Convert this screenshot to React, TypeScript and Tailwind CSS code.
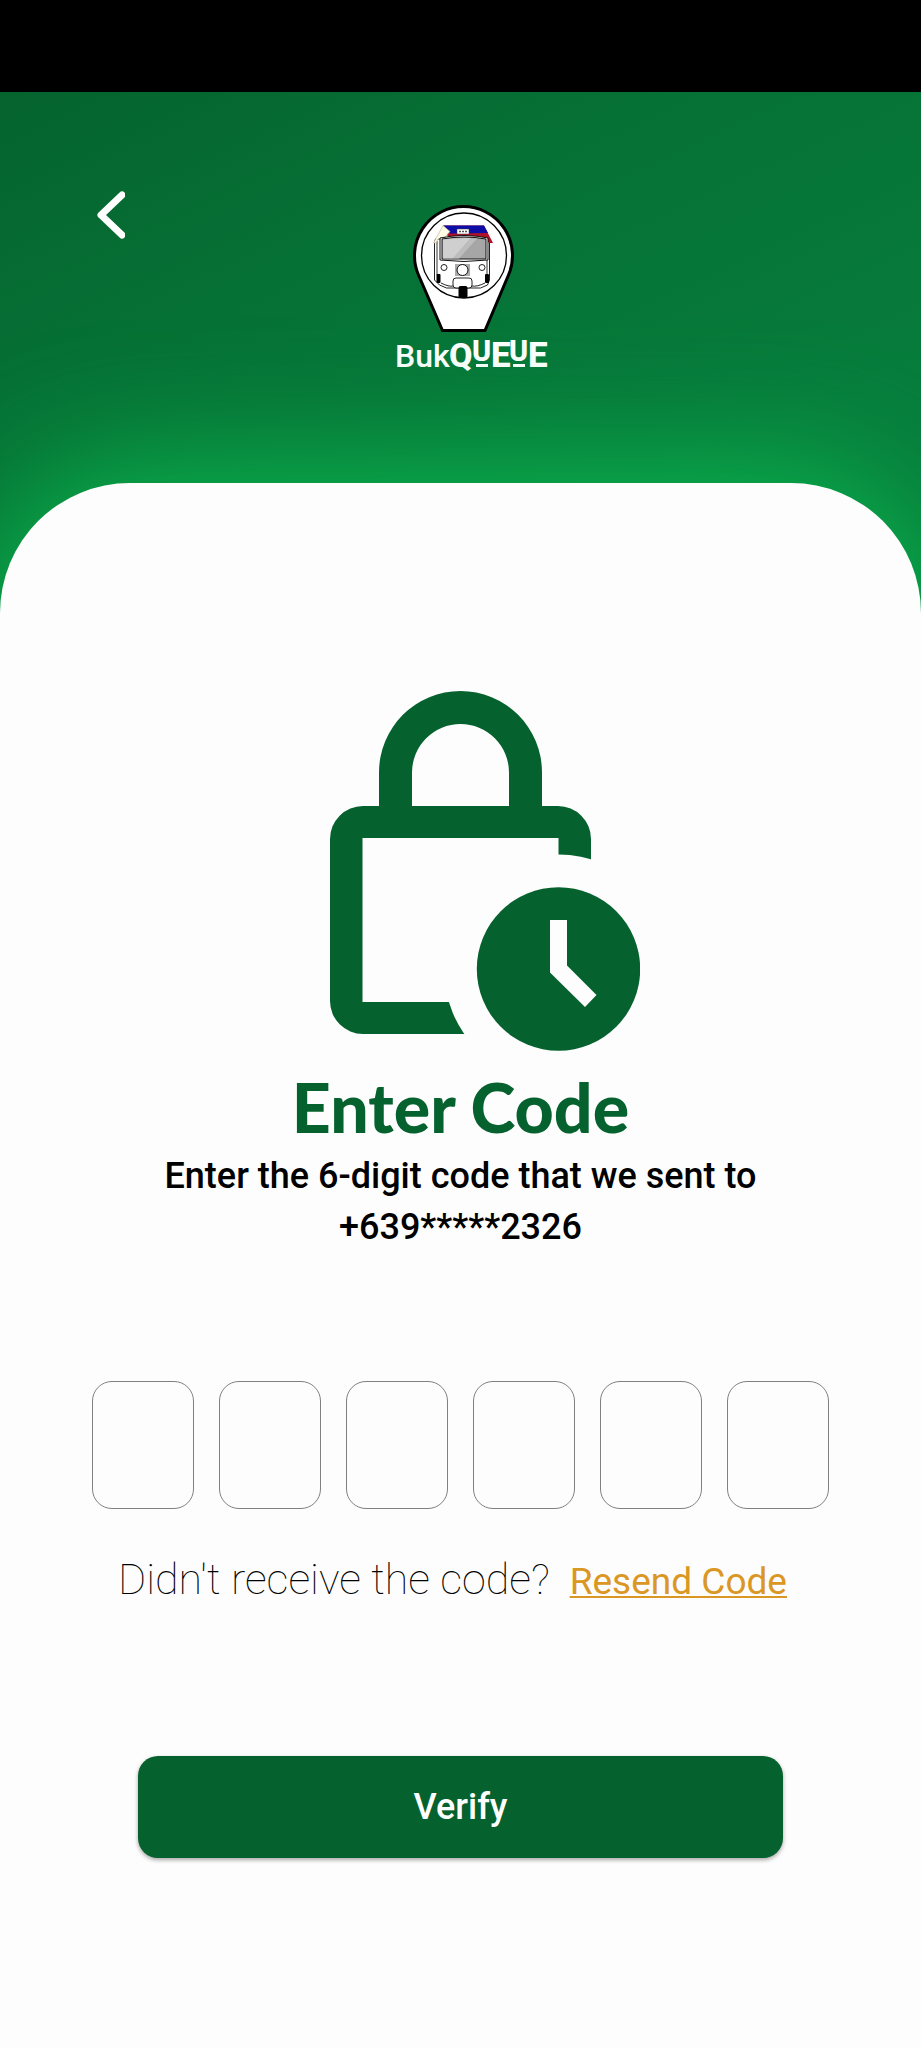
import { useRef, useState } from "react";

const CODE_LENGTH = 6;

function BackIcon() {
  return (
    <svg viewBox="0 0 28 48" className="h-12 w-7" fill="none" aria-hidden="true">
      <path d="M25 4 4 24 25 44" stroke="#fff" strokeWidth="7" strokeLinecap="round" strokeLinejoin="round" />
    </svg>
  );
}

function Logo() {
  return (
    <svg viewBox="372 202 178 180" className="h-[180px] w-[178px]" role="img" aria-label="BukQUEUE">
      <path d="M442.500 330.500 418.500 275A49 49 0 1 1 508.500 275L485 330.500Z" fill="#fff" stroke="#000" strokeWidth="3" />
      <circle cx="464" cy="255.500" r="42.500" fill="#fff" stroke="#000" strokeWidth="1.300" />
      <path d="M435.500 239 434.500 242V280l5 5 7 3h34l7-3 2-5V242l-2-3Z" fill="#fff" stroke="#222" strokeWidth="1" />
      <path d="M437 241v34M487 241v34" stroke="#999" strokeWidth="2" />
      <path d="M443 225.500h41l9 17.500h-4l-5-6h-36Z" fill="#b01028" />
      <path d="M443 225.500h41l4 7.500-38 .5Z" fill="#0d0da5" />
      <path d="M443 225.500 450 231.500 445 237 438 239 436 243h-2.500Z" fill="#fffbe6" stroke="#b9b08c" strokeWidth=".6" />
      <rect x="457" y="229" width="12" height="5" fill="#fff" stroke="#444" strokeWidth=".5" />
      <path d="M459 231.500h8" stroke="#555" strokeWidth="1.500" strokeDasharray="2 1" />
      <path d="M440 238q24-5 48 0v22q-24 3-48 0Z" fill="#fff" stroke="#111" strokeWidth="1" />
      <path d="M442 239q22-4 44 0v20h-44Z" fill="#a6a6a6" stroke="#111" strokeWidth="1" />
      <path d="M443 239.500q14-2 28-1.500l-18 20.500h-10Z" fill="#cfcfcf" />
      <path d="M471 238.500h6l-18 20h-6Z" fill="#bdbdbd" />
      <rect x="455" y="264" width="15" height="12" fill="#aaa" />
      <circle cx="462.500" cy="270" r="5.500" fill="#fff" stroke="#111" strokeWidth="1" />
      <circle cx="444" cy="267.500" r="3" fill="#fff" stroke="#222" strokeWidth="1" />
      <circle cx="482" cy="267.500" r="3" fill="#fff" stroke="#222" strokeWidth="1" />
      <rect x="436.500" y="274" width="4" height="9" rx="1" fill="#000" />
      <rect x="485" y="274" width="4" height="9" rx="1" fill="#000" />
      <path d="M441 283q8 4 12 3M485 283q-8 4-13 3" stroke="#222" strokeWidth="1" fill="none" />
      <rect x="453" y="278" width="19" height="10" rx="3" fill="#fff" stroke="#222" strokeWidth="1" />
      <rect x="458.500" y="286" width="9" height="12" rx="2" fill="#000" />
      <g fill="#fff" fontFamily="Roboto, sans-serif">
        <text x="395" y="367" fontSize="32" fontWeight="500">Buk</text>
        <g fontWeight="800">
          <text x="449" y="367" fontSize="34">Q</text>
          <text x="472" y="361" fontSize="29">U</text>
          <text x="491" y="367" fontSize="35">E</text>
          <text x="509" y="361" fontSize="29">U</text>
          <text x="528" y="367" fontSize="35">E</text>
        </g>
        <rect x="476" y="364" width="12" height="3" />
        <rect x="513" y="364" width="12" height="3" />
      </g>
    </svg>
  );
}

function LockClockIcon() {
  return (
    <svg viewBox="0 0 310 360" className="h-[360px] w-[310px]" aria-hidden="true">
      <path
        fillRule="evenodd"
        fill="#05622e"
        d="M33 115H49V81.500a81.500 81.500 0 0 1 163 0V115H228a33 33 0 0 1 33 33V310a33 33 0 0 1-33 33H33a33 33 0 0 1-33-33V148a33 33 0 0 1 33-33ZM82 115H179V81.500a48.500 48.500 0 0 0-97 0ZM32.500 147V311H228.500V147Z"
      />
      <circle cx="228.500" cy="278" r="114.500" fill="#fdfdfd" />
      <circle cx="228.500" cy="278" r="81.700" fill="#05622e" />
      <path d="M220 229H237V274.500L266.500 304 255 316 220 281.500Z" fill="#fdfdfd" />
    </svg>
  );
}

function CodeInput() {
  const [digits, setDigits] = useState<string[]>(Array(CODE_LENGTH).fill(""));
  const boxes = useRef<(HTMLInputElement | null)[]>([]);

  const update = (index: number, value: string) => {
    const digit = value.replace(/\D/g, "").slice(-1);
    setDigits(digits.map((d, i) => (i === index ? digit : d)));
    if (digit) boxes.current[index + 1]?.focus();
  };

  return (
    <div className="mt-32 grid w-4/5 grid-cols-6 gap-[25px]">
      {digits.map((digit, i) => (
        <input
          key={i}
          ref={(el) => {
            boxes.current[i] = el;
          }}
          aria-label={`Digit ${i + 1}`}
          inputMode="numeric"
          maxLength={1}
          value={digit}
          onChange={(e) => update(i, e.target.value)}
          className="h-32 w-full min-w-0 rounded-[20px] border border-[#808080] bg-transparent text-center text-4xl text-black outline-none focus:border-[#05622e]"
        />
      ))}
    </div>
  );
}

export default function App() {
  return (
    <div className="flex min-h-screen flex-col bg-black font-['Roboto',sans-serif]">
      <div className="h-[92px]" />
      <main className="flex flex-1 flex-col overflow-hidden bg-[linear-gradient(155deg,#05632e_0px,#067135_280px,#077c3c_640px)]">
        <header className="grid h-[391px] grid-cols-[1fr_auto_1fr] items-start">
          <button type="button" aria-label="Back" className="mt-[99px] ml-[97px] w-7 cursor-pointer">
            <BackIcon />
          </button>
          <div className="mt-[110px]">
            <Logo />
          </div>
        </header>
        <section className="flex flex-1 flex-col items-center rounded-t-[130px] bg-[#fdfdfd] pt-[208px] shadow-[0_0_130px_10px_#0cb84f]">
          <div className="pl-12">
            <LockClockIcon />
          </div>
          <h1 className="mt-4 mb-1 font-['Lato',sans-serif] text-[68px] leading-[80px] font-black text-[#05622e]">Enter Code</h1>
          <p className="text-center text-[36px] leading-[51px] font-medium text-black">
            Enter the 6-digit code that we sent to
            <br />
            +639*****2326
          </p>
          <CodeInput />
          <div className="mt-[46px] mr-4 flex items-baseline gap-5">
            <span className="text-[43px] leading-[48px] font-thin text-black">Didn't receive the code?</span>
            <a href="#resend" className="text-[37px] leading-[48px] text-[#db9724] underline decoration-2 underline-offset-2">
              Resend Code
            </a>
          </div>
          <button
            type="submit"
            className="mt-[150px] mb-48 h-[102px] w-[70%] cursor-pointer rounded-[20px] bg-[#05622e] text-[36px] font-medium text-white shadow-[0_2px_4px_rgba(0,0,0,0.35)]"
          >
            Verify
          </button>
        </section>
      </main>
    </div>
  );
}
